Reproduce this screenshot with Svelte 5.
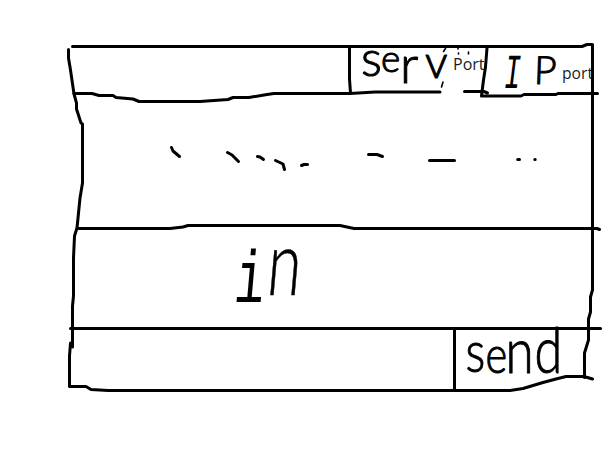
<script>
  const frame = [
    'M72.5 46.5H582L587 44.5H592.5V100V290L590.5 297V312L588.5 319V340L584.5 353V377.5',
    'M68.5 49.5V58L70.5 70L74 94L76.5 103V109L81 123L82.5 124V183L80 198L77 228L74.5 236L73.5 258V296L72.5 306V347L70.5 343L69.5 356V386.5H86L91 389.5L108 390.5H510L523 388.5L543 382.5L556 379L566 376.5H584L592.5 379',
    'M74 93.5H92L99 95.5H113L116 97.5L133 99L139 101.5H200L228 99.5L233 97.5H249L267 94.5L274 93.5H350L375 92H440',
    'M349.5 47V79L350.5 93',
    'M487 48L485.5 67L483.5 80L481.5 96H521L524 94.5H556L558 93.5H597.5',
    'M464.5 91.5H484L487.5 93',
    'M77 228.5H170L183 227L188 225.5H340L354 228.5H597L599.5 229.5',
    'M70.5 328.5H600.5',
    'M454.5 329V389'
  ];
  const marks = [
    'M171.5 147.5L173 151L179.5 156.5',
    'M227.5 152.5L232 155L238.5 161.5',
    'M257.5 156.5L260 157L263.5 159.5',
    'M275.5 160.5L283 164L284.5 169.5',
    'M301.5 165.5L304 164.5H307.5',
    'M368.5 154.5H377L382.5 156.5',
    'M429.5 160.5H454.5',
    'M517.7 159.5H519.5M534.8 159.5H535.2'
  ];
  const crumbs = ['M445.5 48.5L443.5 51.5', 'M443 82L441.5 87', 'M458 48V49', 'M458.5 53V54', 'M468.5 52V54'];
</script>

<main>
  <svg viewBox="0 0 614 460" width="614" height="460">
    <g class="label">
      <text x="453" y="70" textLength="31.5" lengthAdjust="spacingAndGlyphs">Port</text>
      <text x="562" y="79" textLength="31" lengthAdjust="spacingAndGlyphs">port</text>
    </g>
    <g class="pen">
      {#each frame as d}<path {d} />{/each}
      {#each marks as d}<path {d} />{/each}
    </g>
    <g class="crumb">
      {#each crumbs as d}<path {d} />{/each}
    </g>
    <g class="hand">
      <text x="361 381 400 425" y="76 71.5 83 77.5" font-size="49"><tspan>s</tspan><tspan font-size="37">e</tspan><tspan font-size="52">r</tspan><tspan font-size="45">v</tspan></text>
      <text class="slab" transform="translate(502.5 88) skewX(-7) scale(.58 1)" font-size="49">I</text>
      <text transform="translate(533.5 83.5) skewX(-2)" font-size="39">P</text>
      <text class="wide" transform="translate(233 302) skewX(-5) scale(.68 1)" x="0 47" y="0 -7.5" font-size="90"><tspan class="slab" font-size="74">i</tspan><tspan>n</tspan></text>
      <text transform="scale(.8 1)" x="582 607 632 668" y="372 373 373.5 373" font-size="58"><tspan>s</tspan><tspan font-size="52">e</tspan><tspan font-size="64">n</tspan><tspan font-size="63">d</tspan></text>
    </g>
  </svg>
</main>

<style>
  :global(body) { margin: 0; background: #fff; }
  main { width: 614px; height: 460px; overflow: hidden; background: #fff; }
  svg { display: block; }
  .pen path { fill: none; stroke: #000; stroke-width: 3; stroke-linecap: round; stroke-linejoin: round; }
  .crumb path { fill: none; stroke: #000; stroke-width: 1.6; stroke-linecap: round; }
  .label { font: 16px "Open Sans", "Noto Sans", sans-serif; fill: #151b28; }
  .hand { font-family: Lato, "Open Sans", sans-serif; font-weight: 300; fill: #000; stroke: #000; stroke-width: 1; stroke-linejoin: round; }
  .wide { stroke-width: .6; }
  .slab { font-family: "Liberation Mono", monospace; font-weight: 400; stroke-width: 0; }
</style>
